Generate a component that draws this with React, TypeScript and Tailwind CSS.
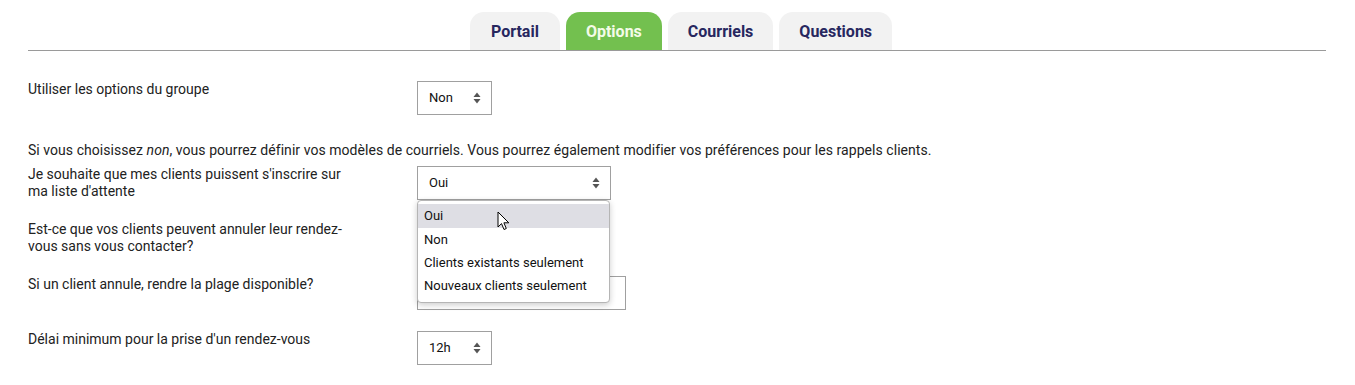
import React from "react";

const tabs = ["Portail", "Options", "Courriels", "Questions"];

function Arrows() {
  return (
    <svg width="8" height="12" viewBox="0 0 8 12" className="shrink-0">
      <path d="M4 0.5 L7.5 5 L0.5 5 Z" fill="#555" />
      <path d="M4 11.5 L7.5 7 L0.5 7 Z" fill="#555" />
    </svg>
  );
}

function Select({ value, width, arrows = true }: { value?: string; width: string; arrows?: boolean }) {
  return (
    <div
      className={`${width} h-[34px] border border-[#a0a0a0] bg-white flex items-center justify-between pl-[11px] pr-[10px] text-[13px] text-[#111]`}
    >
      <span>{value}</span>
      {arrows && <Arrows />}
    </div>
  );
}

function Row({ label, children }: { label: string; children: React.ReactNode }) {
  return (
    <div className="flex mb-[21px]">
      <div className="w-[389px] shrink-0">
        <p className="w-[325px] text-[14px] leading-[17px] text-[#222]">{label}</p>
      </div>
      {children}
    </div>
  );
}

function Cursor() {
  return (
    <svg width="14" height="21" viewBox="0 0 14 21" className="absolute left-[79px] top-[10px]">
      <path
        d="M1 1 L1 16 L4.5 12.6 L7 18.5 L9.3 17.5 L6.9 11.8 L11.8 11.8 Z"
        fill="white"
        stroke="black"
        strokeWidth="1"
        strokeLinejoin="round"
      />
    </svg>
  );
}

export default function App() {
  return (
    <div className="w-[1355px] h-[385px] bg-white overflow-hidden font-['Roboto',sans-serif]">
      <div className="pl-[28px] pr-[29px] pt-[12px]">
        {/* tabs */}
        <div className="flex justify-center gap-[6px] border-b border-[#9a9a9a] pl-[8px]">
          {tabs.map((t) => (
            <div
              key={t}
              className={
                t === "Options"
                  ? "h-[38px] min-w-[90px] px-[20px] pt-[1px] rounded-t-[14px] bg-[#73c04f] text-[#f4fbe8] text-[16px] font-bold flex items-center justify-center"
                  : "h-[38px] min-w-[90px] px-[20px] pt-[1px] rounded-t-[14px] bg-[#f2f2f2] text-[#27275f] text-[16px] font-bold flex items-center justify-center"
              }
            >
              {t}
            </div>
          ))}
        </div>

        {/* form */}
        <div className="mt-[30px]">
          <div className="flex">
            <div className="w-[389px] shrink-0">
              <p className="text-[14px] leading-[17px] text-[#222]">Utiliser les options du groupe</p>
            </div>
            <Select value="Non" width="w-[75px]" />
          </div>

          <p className="mt-[27px] mb-[7px] text-[14px] leading-[17px] text-[#222] tracking-[0.05px]">
            Si vous choisissez <em>non</em>, vous pourrez définir vos modèles de courriels. Vous pourrez également
            modifier vos préférences pour les rappels clients.
          </p>

          <Row label="Je souhaite que mes clients puissent s'inscrire sur ma liste d'attente">
            <div className="relative">
              <Select value="Oui" width="w-[194px]" />
              {/* open dropdown */}
              <div className="absolute left-0 top-[34px] z-10 w-[193px] h-[103px] bg-white border border-[#b5b5b5] rounded-[4px] shadow-[0_2px_6px_rgba(0,0,0,0.2)] pt-[3px] text-[13px] text-[#111]">
                <div className="h-[24px] leading-[24px] pl-[6px] bg-[#dedee4]">Oui</div>
                <div className="h-[23px] leading-[23px] pl-[6px]">Non</div>
                <div className="h-[23px] leading-[23px] pl-[6px]">Clients existants seulement</div>
                <div className="h-[23px] leading-[23px] pl-[6px]">Nouveaux clients seulement</div>
                <Cursor />
              </div>
            </div>
          </Row>

          <Row label="Est-ce que vos clients peuvent annuler leur rendez-vous sans vous contacter?">
            <Select width="w-[120px]" arrows={false} />
          </Row>

          <Row label="Si un client annule, rendre la plage disponible?">
            <Select width="w-[209px]" arrows={false} />
          </Row>

          <Row label="Délai minimum pour la prise d'un rendez-vous">
            <Select value="12h" width="w-[75px]" />
          </Row>
        </div>
      </div>
    </div>
  );
}
